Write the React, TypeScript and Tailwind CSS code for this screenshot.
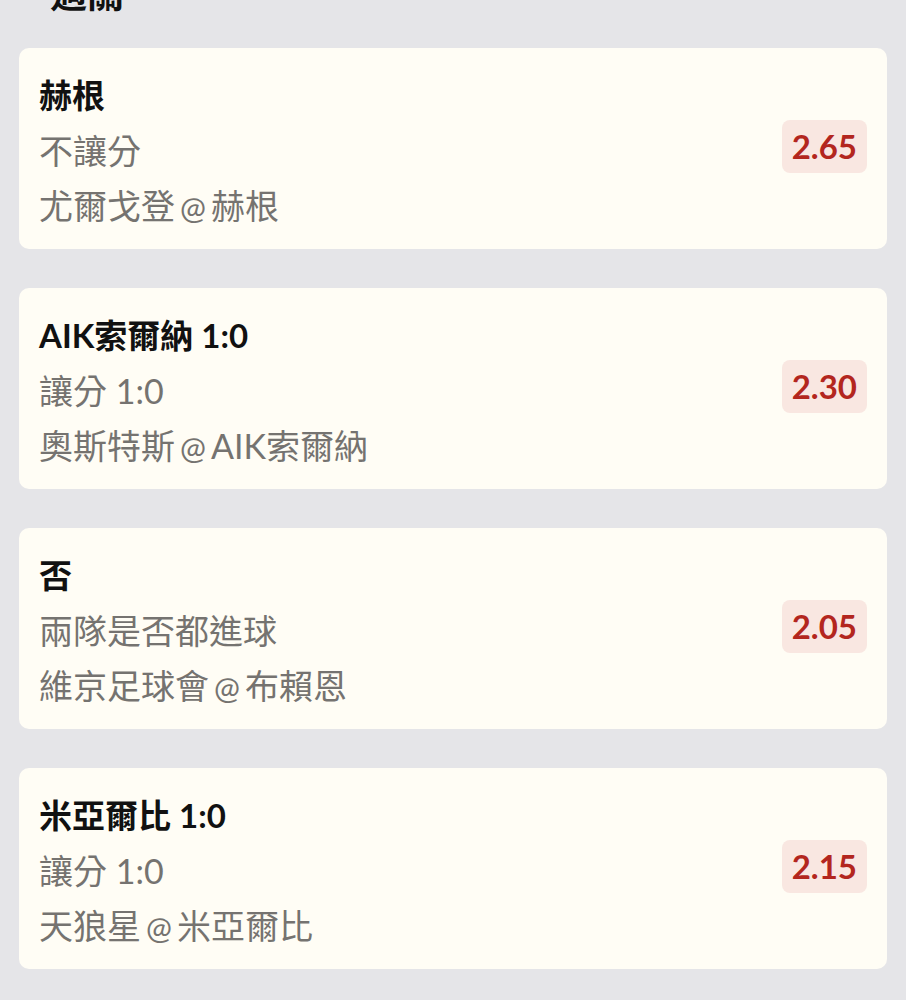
import React from 'react';

type Bet = { pick: string; market: string; home: string; away: string; odds: string };

const bets: Bet[] = [
  { pick: '赫根', market: '不讓分', away: '尤爾戈登', home: '赫根', odds: '2.65' },
  { pick: 'AIK索爾納 1:0', market: '讓分 1:0', away: '奧斯特斯', home: 'AIK索爾納', odds: '2.30' },
  { pick: '否', market: '兩隊是否都進球', away: '維京足球會', home: '布賴恩', odds: '2.05' },
  { pick: '米亞爾比 1:0', market: '讓分 1:0', away: '天狼星', home: '米亞爾比', odds: '2.15' },
];

const BetCard = ({ bet }: { bet: Bet }) => {
  return (
    <div className="flex items-center justify-between rounded-[10px] bg-[#fffdf5] pl-[20px] pr-[20px] pt-[20px] pb-[16px]">
      <div className="flex flex-col">
        <div className="text-[33px] leading-[55px] font-bold text-[#111111]">{bet.pick}</div>
        <div className="text-[34px] leading-[55px] text-[#757370]">{bet.market}</div>
        <div className="text-[34px] leading-[55px] text-[#757370]">
          {bet.away}
          <span className="mx-[5px] text-[31px] leading-none">@</span>
          {bet.home}
        </div>
      </div>
      <div className="-mt-[8px] rounded-[8px] bg-[#f9e7e1] px-[10px] py-[5px] text-[33px] leading-[43px] font-bold text-[#b3261e]">
        {bet.odds}
      </div>
    </div>
  );
};

export default function App() {
  return (
    <div
      className="min-h-[1000px] overflow-hidden bg-[#e5e5e8] px-[19px]"
      style={{ fontFamily: 'Lato, "Noto Sans CJK TC", sans-serif' }}
    >
      <div className="-mt-[30px] pl-[31px] text-[37px] leading-[48px] font-bold text-[#111111]">過關</div>
      <div className="mt-[30px] flex flex-col gap-[39px]">
        {bets.map((b) => (
          <BetCard key={b.odds} bet={b} />
        ))}
      </div>
    </div>
  );
}
